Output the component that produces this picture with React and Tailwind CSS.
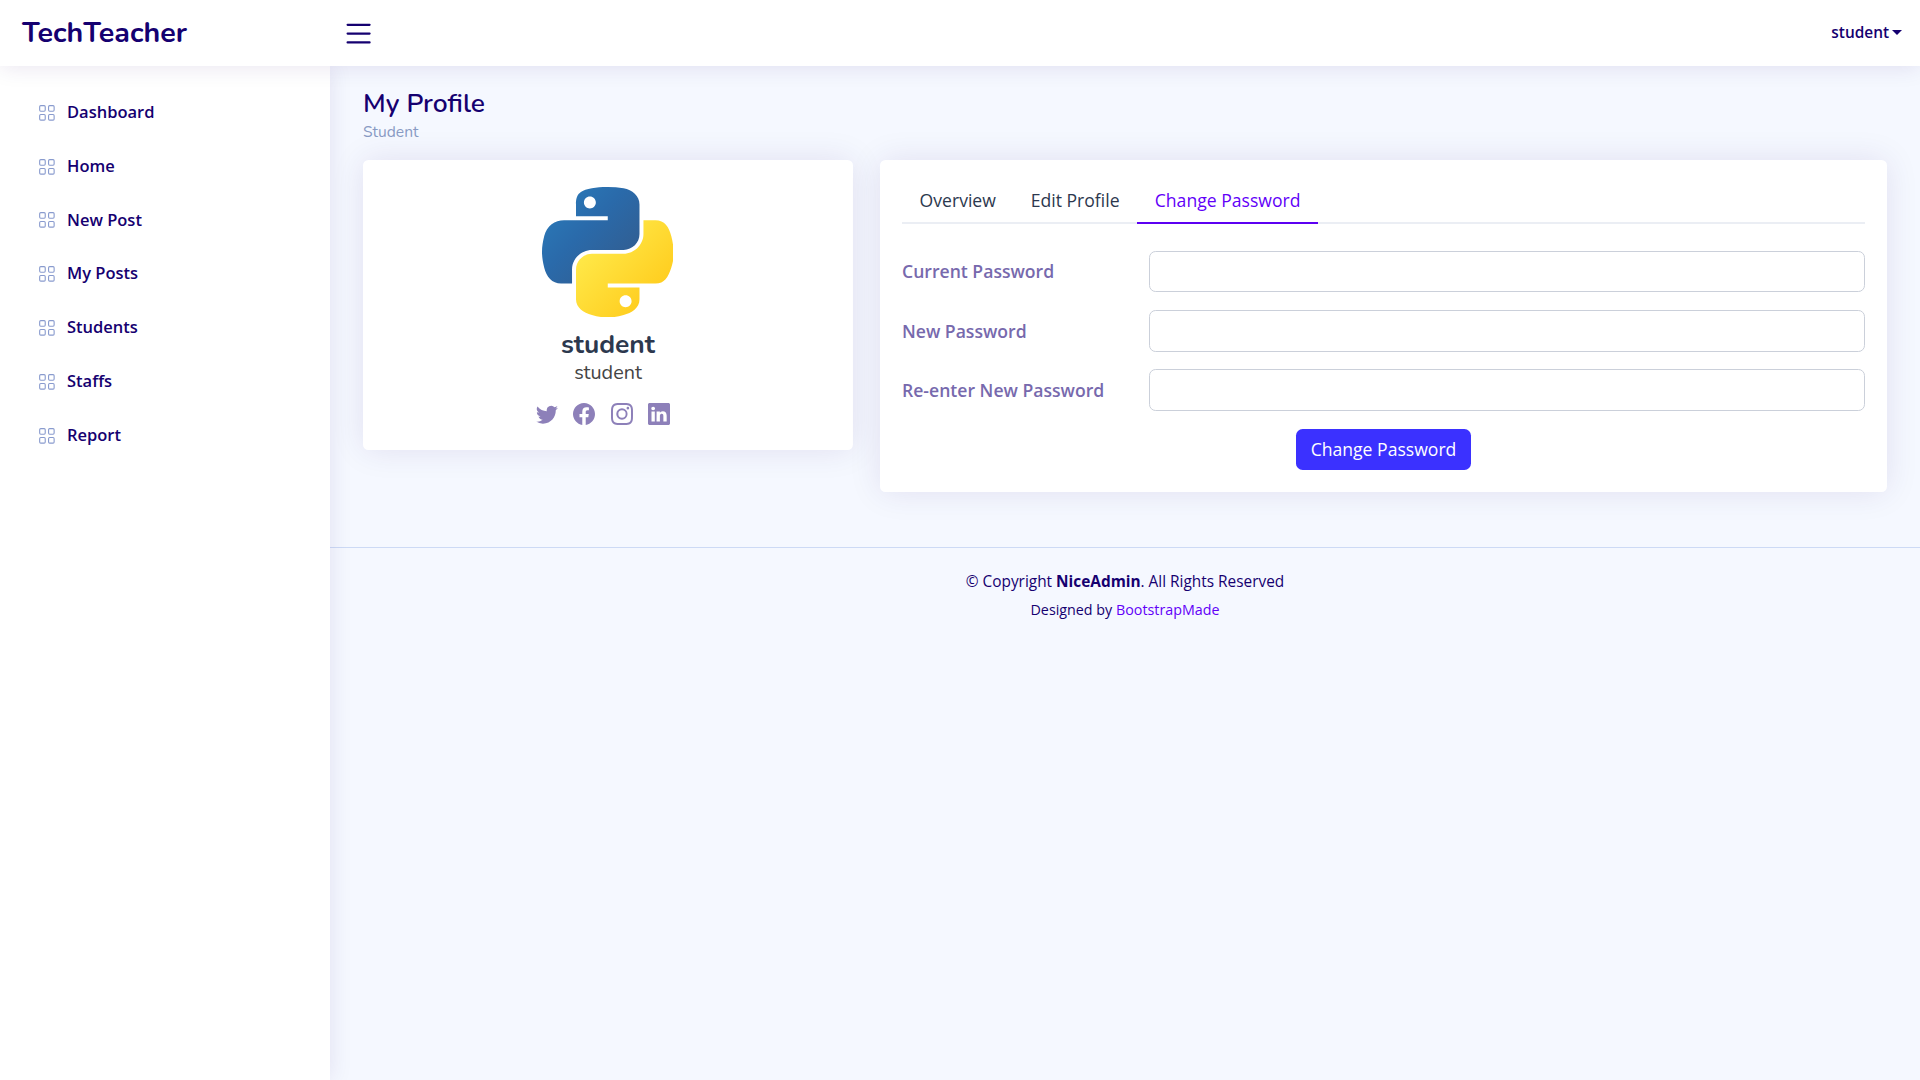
import React from "react";
import { BsGrid, BsTwitter, BsFacebook, BsInstagram, BsLinkedin, BsList } from "react-icons/bs";

const navItems = ["Dashboard", "Home", "New Post", "My Posts", "Students", "Staffs", "Report"];
const fields = ["Current Password", "New Password", "Re-enter New Password"];
const socials = [BsTwitter, BsFacebook, BsInstagram, BsLinkedin];

function Header() {
  return (
    <header className="relative z-20 flex h-[66px] items-center bg-white pl-[22px] pr-[18px] shadow-[0_2px_22px_rgba(50,1,110,0.1)]">
      <div className="w-[308px] font-['Nunito','Nunito_Sans',sans-serif] text-[28.6px] leading-none font-bold text-[#150070]">
        <span>TechTeacher</span>
      </div>
      <BsList className="mt-[1px] ml-[11px] size-[35.2px] text-[#150070]" />
      <div className="ml-auto flex items-center text-[15.4px] font-semibold text-[#150070]">
        <span>student</span>
        <span className="ml-[3px] border-x-5 border-t-5 border-x-transparent border-t-[#150070]" />
      </div>
    </header>
  );
}

function Sidebar() {
  return (
    <aside className="relative z-10 w-[330px] shrink-0 bg-white px-[22px] pt-[19.5px] shadow-[0_0_22px_rgba(50,1,110,0.1)]">
      <ul>
        {navItems.map((label) => (
          <li key={label} className="flex h-[53.8px] items-center px-[16px] text-[16.5px] font-semibold text-[#150070]">
            <BsGrid className="mt-[0.6px] mr-[11.2px] size-[17.8px] text-[#899bce]" />
            <span>{label}</span>
          </li>
        ))}
      </ul>
    </aside>
  );
}

function PythonLogo() {
  return (
    <svg className="mr-[1px] h-[130px] w-[131.5px]" viewBox="0 0 111 112" preserveAspectRatio="none">
      <defs>
        <linearGradient id="blue" gradientUnits="userSpaceOnUse" x1="10" y1="10" x2="65" y2="62">
          <stop offset="0" stopColor="#2a79b8" />
          <stop offset="0.5" stopColor="#2a6aaa" />
          <stop offset="1" stopColor="#306096" />
        </linearGradient>
        <linearGradient id="yellow" gradientUnits="userSpaceOnUse" x1="38" y1="58" x2="85" y2="102">
          <stop offset="0" stopColor="#ffe746" />
          <stop offset="1" stopColor="#ffce20" />
        </linearGradient>
      </defs>
      <path fill="url(#blue)" d="M54.919 0C50.335.022 45.958.413 42.106 1.095 30.76 3.099 28.7 7.295 28.7 15.032v10.219h26.813v3.406H18.638c-7.793 0-14.616 4.684-16.75 13.594-2.462 10.213-2.571 16.586 0 27.25 1.906 7.938 6.457 13.594 14.25 13.594h9.218v-12.25c0-8.85 7.658-16.657 16.75-16.657h26.782c7.455 0 13.406-6.138 13.406-13.625V15.032c0-7.266-6.13-12.725-13.406-13.937C64.282.328 59.502-.02 54.919 0zm-14.5 8.22c2.769 0 5.031 2.298 5.031 5.125 0 2.816-2.262 5.093-5.031 5.093-2.78 0-5.032-2.277-5.032-5.093 0-2.827 2.252-5.125 5.032-5.125z" />
      <path fill="url(#yellow)" d="M85.638 28.657v11.906c0 9.231-7.826 17-16.75 17H42.106c-7.336 0-13.406 6.279-13.406 13.625V96.72c0 7.266 6.319 11.54 13.406 13.625 8.488 2.496 16.627 2.947 26.782 0 6.75-1.954 13.406-5.888 13.406-13.625V86.501H55.513v-3.406H95.7c7.793 0 10.696-5.436 13.406-13.594 2.8-8.399 2.68-16.476 0-27.25-1.925-7.757-5.603-13.594-13.406-13.594zm-15.063 64.657c2.78 0 5.031 2.277 5.031 5.093 0 2.827-2.251 5.125-5.031 5.125-2.77 0-5.031-2.298-5.031-5.125 0-2.816 2.262-5.093 5.031-5.093z" />
    </svg>
  );
}

function ProfileCard() {
  return (
    <section className="flex h-[290px] w-[490px] flex-col items-center rounded-[5.5px] bg-white pt-[27px] shadow-[0_0_33px_rgba(50,1,110,0.1)]">
      <PythonLogo />
      <h2 className="mt-[11px] font-['Nunito','Nunito_Sans',sans-serif] text-[26.4px] leading-[32px] font-bold text-[#2c384e]">student</h2>
      <h3 className="mt-[1px] font-['Nunito','Nunito_Sans',sans-serif] text-[19.8px] leading-[24px] text-[#444444]">student</h3>
      <div className="mt-[18px] mr-[10.5px] flex gap-[15.5px] text-[#8d80b9]">
        {socials.map((Icon, i) => (
          <Icon key={i} className="size-[22px]" />
        ))}
      </div>
    </section>
  );
}

function PasswordCard() {
  return (
    <section className="h-[332px] w-[1007px] rounded-[5.5px] bg-white px-[22px] pt-[17.6px] shadow-[0_0_33px_rgba(50,1,110,0.1)]">
      <nav className="flex h-[46.4px] border-b-2 border-[#ebeef4] text-[17.6px] leading-[26.4px] text-[#2c384e]">
        <span className="pr-[17.4px] pl-[17.6px] pt-[9.6px]">Overview</span>
        <span className="px-[17.4px] pt-[9.6px]">Edit Profile</span>
        <span className="-mb-[2px] border-b-2 border-[#5c00f2] pr-[17.4px] pl-[17.8px] pt-[9.6px] text-[#6200f8]">Change Password</span>
      </nav>
      <form className="flex flex-col items-center gap-[17.8px] pt-[26.6px]">
        {fields.map((label) => (
          <label key={label} className="flex w-full items-center text-[17.6px] font-semibold text-[#7769ad]">
            <span className="w-[247.4px] shrink-0">{label}</span>
            <input type="password" className="h-[41.6px] min-w-0 flex-1 rounded-[6.6px] border border-[#cbd0da] bg-white" />
          </label>
        ))}
        <button type="button" className="h-[41px] w-[175px] rounded-[6.6px] bg-[#3b31ff] text-[17.6px] text-white">Change Password</button>
      </form>
    </section>
  );
}

export default function App() {
  return (
    <div className="flex h-screen flex-col overflow-hidden bg-[#f5f8ff] font-['Open_Sans',sans-serif] text-[#444444]">
      <Header />
      <div className="flex min-h-0 flex-1">
        <Sidebar />
        <div className="min-w-0 flex-1">
          <main className="h-[481px] px-[33px] pt-[22px]">
            <div className="h-[72px] font-['Nunito','Nunito_Sans',sans-serif]">
              <h1 className="text-[26.4px] leading-[31.7px] font-semibold text-[#150070]">My Profile</h1>
              <p className="mt-[1px] text-[15.6px] leading-[23px] text-[#899bc4]">Student</p>
            </div>
            <div className="flex items-start gap-[27px]">
              <ProfileCard />
              <PasswordCard />
            </div>
          </main>
          <footer className="border-t border-[#cddaf5] pt-[22px] text-center text-[#150070]">
            <p className="text-[15.4px] leading-[23px]">© Copyright <strong>NiceAdmin</strong>. All Rights Reserved</p>
            <p className="mt-[6px] text-[14.3px] leading-[21.5px]">Designed by <a className="text-[#6200f8]">BootstrapMade</a></p>
          </footer>
        </div>
      </div>
    </div>
  );
}
